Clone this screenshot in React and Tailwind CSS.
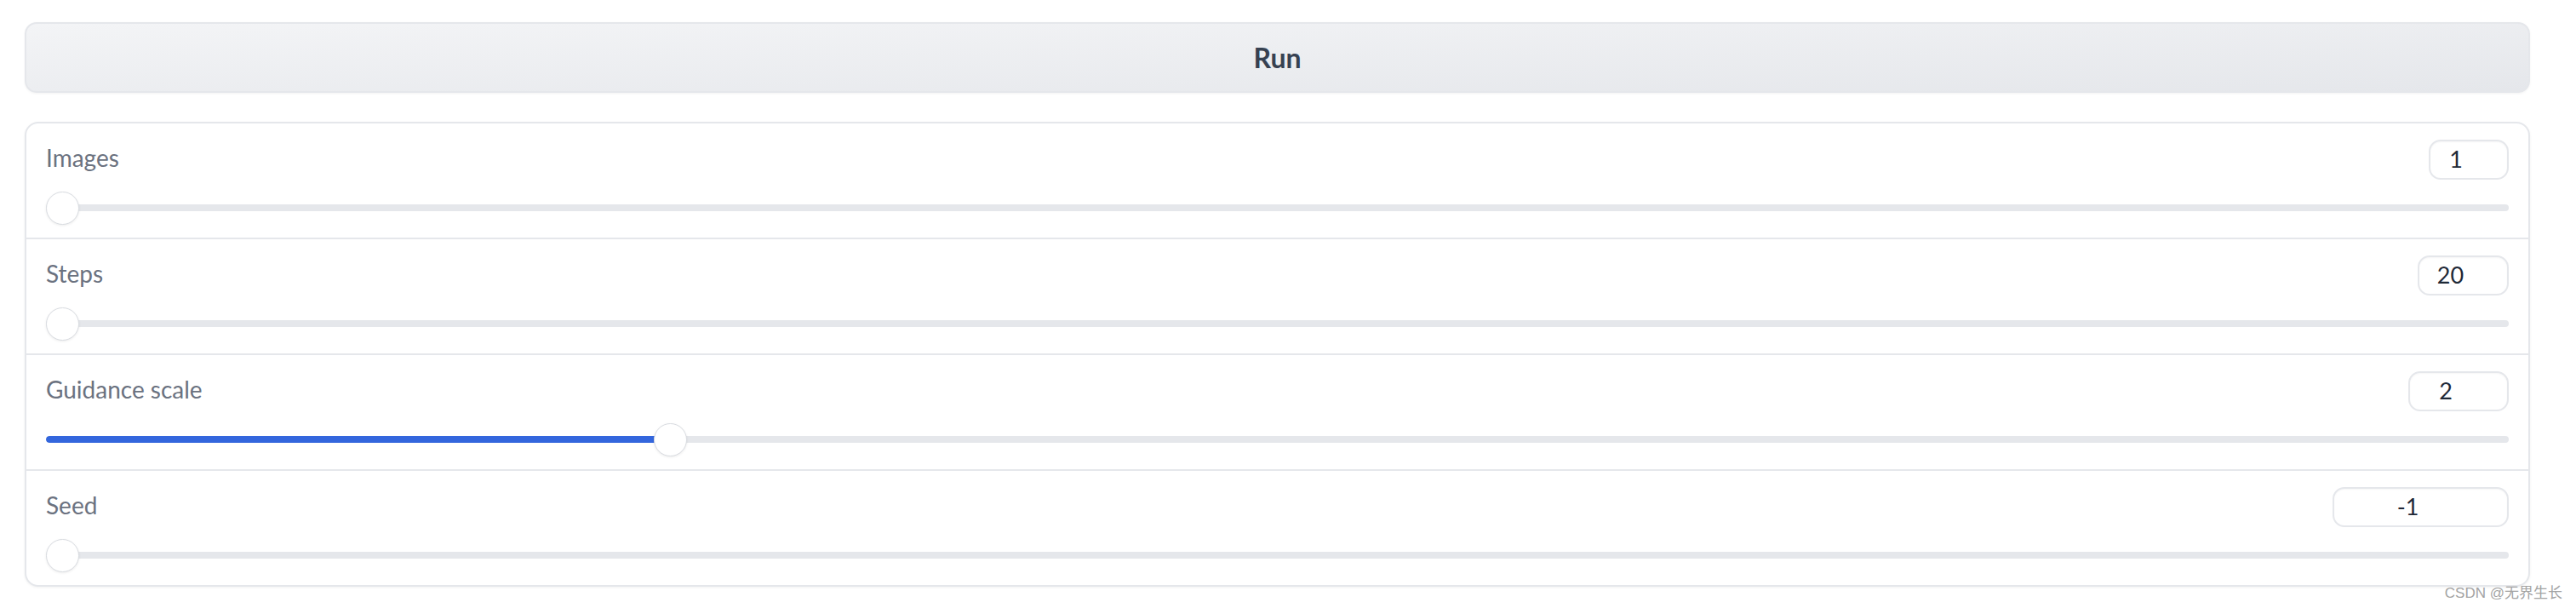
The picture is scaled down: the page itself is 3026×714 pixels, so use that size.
import React from 'react';

const sliders = [
    { label: 'Images', value: '1', frac: 0, inputW: 'w-[94px]' },
    { label: 'Steps', value: '20', frac: 0, inputW: 'w-[107px]' },
    { label: 'Guidance scale', value: '2', frac: 0.25, inputW: 'w-[118px]' },
    { label: 'Seed', value: '-1', frac: 0, inputW: 'w-[207px]' },
];

const SliderRow = ({ label, value, frac, inputW, first }) => {
    return (
        <div className={`px-[23px] pt-[19px] pb-[15px] ${first ? '' : 'border-t-2 border-[#e5e7eb]'}`}>
            <div className="flex items-center justify-between h-[47px]">
                <span className="text-[28px] text-[#6b7280] leading-none -mt-[6px]">{label}</span>
                <div className={`${inputW} h-[47px] rounded-[14px] border-2 border-[#e5e7eb] bg-white shadow-[inset_0_1px_2px_rgba(0,0,0,0.04)] flex items-center justify-center pr-[30px] text-[27px] text-[#1f2937]`}>
                    {value}
                </div>
            </div>
            <div className="relative mt-[13px] h-[40px] flex items-center">
                <div className="w-full h-[8px] rounded-full bg-[#e5e7eb] overflow-hidden">
                    <div
                        className="h-full bg-[#3366dd] rounded-full"
                        style={{ width: frac > 0 ? `calc(${frac} * (100% - 39px) + 19px)` : 0 }}
                    ></div>
                </div>
                <div
                    className="absolute top-[0.5px] w-[39px] h-[39px] rounded-full bg-white border border-[#d9dce1] shadow-[0_1px_3px_rgba(0,0,0,0.08)]"
                    style={{ left: `calc(${frac} * (100% - 39px))` }}
                ></div>
            </div>
        </div>
    );
};

export default function App() {
    return (
        <div className="relative w-[3026px] h-[714px] bg-white pl-[29px] pr-[54px] pt-[26px] font-['Lato',sans-serif]">
            <button className="w-full h-[83px] rounded-[14px] border-2 border-[#e5e7eb] bg-gradient-to-br from-[#f3f4f6] to-[#e5e7eb] shadow-[0_1px_3px_rgba(0,0,0,0.05)] text-[32px] font-bold text-[#374151]">
                Run
            </button>
            <div className="mt-[34px] rounded-[16px] border-2 border-[#e5e7eb] bg-white shadow-[0_1px_3px_rgba(0,0,0,0.06)]">
                {sliders.map((s, i) => (
                    <SliderRow key={s.label} {...s} first={i === 0} />
                ))}
            </div>
            <div className="absolute right-[16px] bottom-[9px] text-[17px] leading-none text-[#a3a3a3] font-['Liberation_Sans','Noto_Sans_CJK_SC',sans-serif]">
                CSDN @无界生长
            </div>
        </div>
    );
}
